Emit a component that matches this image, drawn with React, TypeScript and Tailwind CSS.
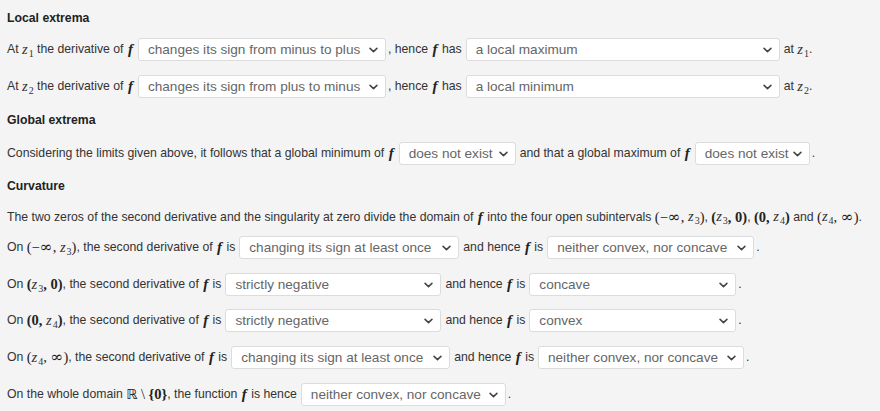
import type { ReactNode } from 'react';

const serif = "font-['Liberation_Serif','Times_New_Roman',serif]";

function Chevron() {
  return (
    <svg className="w-[9px] h-[6px] shrink-0" viewBox="0 0 10 6" fill="none">
      <path d="M1.2 1.2L5 4.8l3.8-3.6" stroke="#444" strokeWidth={1.7} strokeLinecap="round" strokeLinejoin="round" />
    </svg>
  );
}

function Select({ value, width }: { value: string; width: string }) {
  return (
    <div
      className={`${width} h-[23px] mx-[4px] shrink-0 flex items-center justify-between gap-[4px] bg-white border border-[#dcdcdc] rounded-[3px] pl-[9px] pr-[7px] text-[13.6px] text-[#666] leading-none overflow-hidden`}
    >
      <span className="whitespace-nowrap">{value}</span>
      <Chevron />
    </div>
  );
}

function F() {
  return <span className={`${serif} italic font-bold text-[15px] text-[#222] mx-[1px]`}>f</span>;
}

function Z({ n }: { n: number }) {
  return (
    <span className={`${serif} text-[14.5px] text-[#333] inline-flex items-baseline`}>
      <span className="italic">z</span>
      <span className="text-[10px] relative top-[3px] ml-[1px]">{n}</span>
    </span>
  );
}

function M({ children, bold }: { children: ReactNode; bold?: boolean }) {
  return <span className={`${serif} text-[14.5px] text-[#222] ${bold ? 'font-bold' : ''}`}>{children}</span>;
}

function Inf() {
  return <span className="font-['DejaVu_Serif',serif] text-[15.5px] leading-none">∞</span>;
}

function Row({ children, className }: { children: ReactNode; className: string }) {
  return <div className={`flex items-center h-[23px] whitespace-nowrap ${className}`}>{children}</div>;
}

function Heading({ children, className }: { children: ReactNode; className: string }) {
  return <div className={`h-[16px] leading-[16px] font-bold text-[12.25px] text-[#222] ${className}`}>{children}</div>;
}

export default function App() {
  return (
    <div className="w-[880px] h-[411px] overflow-hidden bg-[#f4f4f4] px-[7px] font-['Liberation_Sans',Arial,sans-serif] text-[12.25px] text-[#333]">
      <div className="flex flex-col">
        <Heading className="mt-[10px]">Local extrema</Heading>

        <Row className="mt-[12px]">
          <span>At&nbsp;</span><Z n={1} /><span>&nbsp;the derivative of&nbsp;</span><F />
          <Select value="changes its sign from minus to plus" width="w-[248px]" />
          <span className="-ml-[2px]">, hence&nbsp;</span><F /><span>&nbsp;has</span>
          <Select value="a local maximum" width="w-[314px]" />
          <span>at&nbsp;</span><Z n={1} /><span>.</span>
        </Row>

        <Row className="mt-[14px]">
          <span>At&nbsp;</span><Z n={2} /><span>&nbsp;the derivative of&nbsp;</span><F />
          <Select value="changes its sign from plus to minus" width="w-[248px]" />
          <span className="-ml-[2px]">, hence&nbsp;</span><F /><span>&nbsp;has</span>
          <Select value="a local minimum" width="w-[314px]" />
          <span>at&nbsp;</span><Z n={2} /><span>.</span>
        </Row>

        <Heading className="mt-[14px]">Global extrema</Heading>

        <Row className="mt-[14px]">
          <span>Considering the limits given above, it follows that a global minimum of&nbsp;</span><F />
          <Select value="does not exist" width="w-[117px]" />
          <span>and that a global maximum of&nbsp;</span><F />
          <Select value="does not exist" width="w-[115px]" />
          <span className="-ml-[2px]">.</span>
        </Row>

        <Heading className="mt-[13px]">Curvature</Heading>

        <div className="mt-[15px] h-[16px] leading-[16px] whitespace-nowrap flex items-center">
          <span>The two zeros of the second derivative and the singularity at zero divide the domain of&nbsp;</span><F />
          <span>&nbsp;into the four open subintervals&nbsp;</span>
          <M>(−<Inf />,&nbsp;</M><Z n={3} /><M>)</M><span>,&nbsp;</span>
          <M bold>(</M><Z n={3} /><M bold>,&nbsp;0)</M><span>,&nbsp;</span>
          <M bold>(0,&nbsp;</M><Z n={4} /><M bold>)</M><span>&nbsp;and&nbsp;</span>
          <M>(</M><Z n={4} /><M>,&nbsp;<Inf />)</M><span>.</span>
        </div>

        <Row className="mt-[11px]">
          <span>On&nbsp;</span><M>(−<Inf />,&nbsp;</M><Z n={3} /><M>)</M>
          <span>, the second derivative of&nbsp;</span><F /><span>&nbsp;is</span>
          <Select value="changing its sign at least once" width="w-[220px]" />
          <span>and hence&nbsp;</span><F /><span>&nbsp;is</span>
          <Select value="neither convex, nor concave" width="w-[207px]" />
          <span className="-ml-[2px]">.</span>
        </Row>

        <Row className="mt-[14px]">
          <span>On&nbsp;</span><M bold>(</M><Z n={3} /><M bold>,&nbsp;0)</M>
          <span>, the second derivative of&nbsp;</span><F /><span>&nbsp;is</span>
          <Select value="strictly negative" width="w-[216px]" />
          <span>and hence&nbsp;</span><F /><span>&nbsp;is</span>
          <Select value="concave" width="w-[207px]" />
          <span className="-ml-[2px]">.</span>
        </Row>

        <Row className="mt-[13px]">
          <span>On&nbsp;</span><M bold>(0,&nbsp;</M><Z n={4} /><M bold>)</M>
          <span>, the second derivative of&nbsp;</span><F /><span>&nbsp;is</span>
          <Select value="strictly negative" width="w-[216px]" />
          <span>and hence&nbsp;</span><F /><span>&nbsp;is</span>
          <Select value="convex" width="w-[207px]" />
          <span className="-ml-[2px]">.</span>
        </Row>

        <Row className="mt-[14px]">
          <span>On&nbsp;</span><M>(</M><Z n={4} /><M>,&nbsp;<Inf />)</M>
          <span>, the second derivative of&nbsp;</span><F /><span>&nbsp;is</span>
          <Select value="changing its sign at least once" width="w-[219px]" />
          <span>and hence&nbsp;</span><F /><span>&nbsp;is</span>
          <Select value="neither convex, nor concave" width="w-[206px]" />
          <span className="-ml-[2px]">.</span>
        </Row>

        <Row className="mt-[14px]">
          <span>On the whole domain&nbsp;</span>
          <span className="font-['DejaVu_Sans',sans-serif] text-[14px] text-[#222]">ℝ</span>
          <M>&nbsp;\&nbsp;</M><M bold>{'{0}'}</M>
          <span>, the function&nbsp;</span><F /><span>&nbsp;is hence</span>
          <Select value="neither convex, nor concave" width="w-[205px]" />
          <span className="-ml-[2px]">.</span>
        </Row>
      </div>
    </div>
  );
}
